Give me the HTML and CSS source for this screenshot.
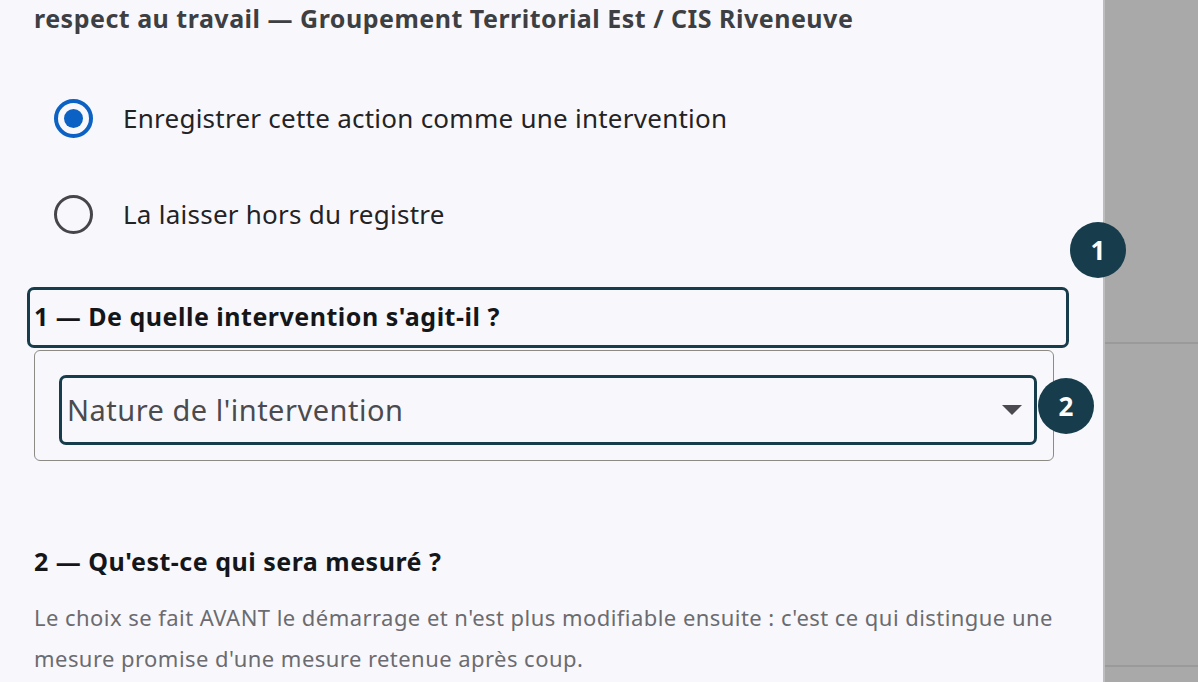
FILE: index.html
```html
<!DOCTYPE html>
<html lang="fr">
<head>
<meta charset="utf-8">
<title>Intervention</title>
<link rel="stylesheet" href="styles.css">
</head>
<body>
<div class="layout">
  <main class="panel">
    <p class="context">respect au travail — Groupement Territorial Est / CIS Riveneuve</p>
    <div class="radios">
      <label class="radio-row">
        <span class="radio checked"><span class="dot"></span></span>
        <span class="radio-label">Enregistrer cette action comme une intervention</span>
      </label>
      <label class="radio-row">
        <span class="radio"></span>
        <span class="radio-label">La laisser hors du registre</span>
      </label>
    </div>
    <div class="step-title focused">1 — De quelle intervention s'agit-il ?</div>
    <div class="select-wrap">
      <div class="select">
        <span class="select-text">Nature de l'intervention</span>
        <svg class="caret" width="20" height="10" viewBox="0 0 20 10"><path d="M0 0H20L10 10Z" fill="#4a4a50"/></svg>
      </div>
    </div>
    <h3 class="step-title plain">2 — Qu'est-ce qui sera mesuré ?</h3>
    <p class="help">Le choix se fait AVANT le démarrage et n'est plus modifiable ensuite : c'est ce qui distingue une mesure promise d'une mesure retenue après coup.</p>
  </main>
  <aside class="side">
    <div class="side-line one"></div>
    <div class="side-line two"></div>
  </aside>
  <span class="badge b1">1</span>
  <span class="badge b2">2</span>
</div>
</body>
</html>
```
FILE: styles.css
```css
html, body {
  margin: 0;
  padding: 0;
  height: 100%;
  overflow: hidden;
}
body {
  background: #f8f8fc;
  font-family: "Noto Sans", "Liberation Sans", sans-serif;
  color: #1c1c1e;
}
.layout {
  position: relative;
  display: flex;
  height: 682px;
}
.panel {
  width: 1103px;
  flex: none;
  box-sizing: border-box;
  padding: 0 0 0 34px;
}
.context {
  margin: 0;
  font-size: 25px;
  letter-spacing: 0.5px;
  line-height: 36px;
  font-weight: 700;
  color: #3e3f43;
}
.radios {
  display: flex;
  flex-direction: column;
  gap: 56px;
  padding: 62px 0 0 20px;
}
.radio-row {
  display: flex;
  align-items: center;
  gap: 30px;
  height: 40px;
}
.radio {
  width: 39px;
  height: 39px;
  box-sizing: border-box;
  border: 3.5px solid #46464a;
  border-radius: 50%;
  display: flex;
  align-items: center;
  justify-content: center;
}
.radio.checked {
  border: 4px solid #0b62c4;
}
.dot {
  width: 19px;
  height: 19px;
  border-radius: 50%;
  background: #0b62c4;
}
.radio-label {
  font-size: 26px;
  letter-spacing: 0.25px;
  color: #232326;
}
.step-title {
  font-size: 25px;
  letter-spacing: 0.5px;
  font-weight: 700;
  color: #15161a;
  margin: 0;
}
.step-title.focused {
  margin: 53px 0 0 -7px;
  width: 1042px;
  height: 61px;
  box-sizing: border-box;
  border: 3px solid #173d4c;
  border-radius: 7px;
  padding: 0 0 4px 4px;
  display: flex;
  align-items: center;
}
.select-wrap {
  margin-top: 2px;
  width: 1020px;
  box-sizing: border-box;
  border: 1px solid #8e8a85;
  border-radius: 6px;
  padding: 24px 16px 15px 24px;
}
.select {
  height: 70px;
  box-sizing: border-box;
  border: 3px solid #173d4c;
  border-radius: 7px;
  display: flex;
  align-items: center;
  justify-content: space-between;
  padding: 0 12px 2px 5px;
}
.select-text {
  font-size: 29px;
  letter-spacing: 0.5px;
  color: #4b4b4f;
}
.caret {
  display: block;
  margin-top: 2px;
}
.step-title.plain {
  margin-top: 82px;
  line-height: 36px;
}
.help {
  margin: 18px 0 0;
  font-size: 22px;
  letter-spacing: 0.45px;
  line-height: 41px;
  color: #6b6b70;
  width: 1045px;
}
.side {
  flex: 1;
  background: #a9a9a9;
  border-left: 2px solid #bdbdbd;
  display: flex;
  flex-direction: column;
}
.side-line {
  border-top: 2px solid #9a9a9a;
}
.side-line.one { margin-top: 342px; }
.side-line.two { margin-top: 321px; }
.badge {
  position: absolute;
  width: 56px;
  height: 56px;
  border-radius: 50%;
  background: #173d4c;
  color: #ffffff;
  font-size: 26px;
  font-weight: 700;
  display: flex;
  align-items: center;
  justify-content: center;
}
.b1 { left: 1070px; top: 222px; }
.b2 { left: 1038px; top: 378px; }
```
